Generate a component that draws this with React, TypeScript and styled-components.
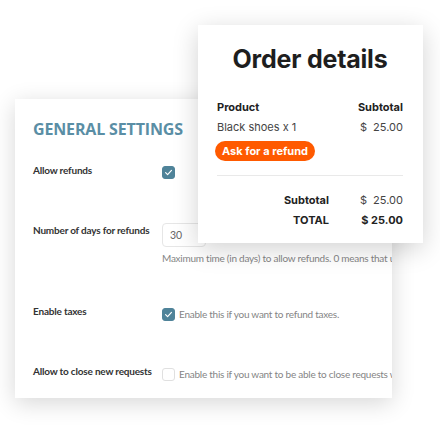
import React from 'react';
import styled, { createGlobalStyle } from 'styled-components';

const GlobalStyle = createGlobalStyle`
	html, body {
		margin: 0;
		padding: 0;
		background: #ffffff;
	}
	* {
		box-sizing: border-box;
	}
`;

const CheckMark = () => (
	<svg width='9' height='9' viewBox='0 0 10 10' fill='none'>
		<path
			d='M1.8 5.2 L4 7.3 L8.3 2.6'
			stroke='#ffffff'
			strokeWidth='1.3'
			strokeLinecap='round'
			strokeLinejoin='round'
		/>
	</svg>
);

interface ISettingRow {
	label: string;
	checked?: boolean;
	input?: string;
	help?: string;
	text?: string;
	height: number;
}

const settings: ISettingRow[] = [
	{ label: 'Allow refunds', checked: true, height: 60 },
	{
		label: 'Number of days for refunds',
		input: '30',
		help: 'Maximum time (in days) to allow refunds. 0 means that users can ask for a refund at any time.',
		height: 81,
	},
	{
		label: 'Enable taxes',
		checked: true,
		text: 'Enable this if you want to refund taxes.',
		height: 60,
	},
	{
		label: 'Allow to close new requests',
		checked: false,
		text: 'Enable this if you want to be able to close requests without answering them.',
		height: 33,
	},
];

export default function App() {
	return (
		<>
			<GlobalStyle />
			<Stage>
				<SettingsCard>
					<SettingsTitle>GENERAL SETTINGS</SettingsTitle>
					{settings.map(row => (
						<Row key={row.label} $height={row.height}>
							<Label>{row.label}</Label>
							<Field>
								{row.input !== undefined ? (
									<>
										<NumberInput>{row.input}</NumberInput>
										<Help>{row.help}</Help>
									</>
								) : (
									<CheckLine>
										<Checkbox $checked={row.checked}>
											{row.checked && <CheckMark />}
										</Checkbox>
										{row.text && <Help>{row.text}</Help>}
									</CheckLine>
								)}
							</Field>
						</Row>
					))}
				</SettingsCard>

				<OrderCard>
					<OrderTitle>Order details</OrderTitle>
					<ItemHead>
						<span>Product</span>
						<span>Subtotal</span>
					</ItemHead>
					<ItemRow>
						<span>Black shoes x 1</span>
						<span>$&nbsp;&nbsp;25.00</span>
					</ItemRow>
					<RefundButton>Ask for a refund</RefundButton>
					<Divider />
					<TotalRow>
						<TotalLabel>Subtotal</TotalLabel>
						<TotalValue>$&nbsp;&nbsp;25.00</TotalValue>
					</TotalRow>
					<TotalRow $gap={6}>
						<TotalLabel>TOTAL</TotalLabel>
						<TotalValue $bold>$ 25.00</TotalValue>
					</TotalRow>
				</OrderCard>
			</Stage>
		</>
	);
}

const Stage = styled.div`
	position: relative;
	width: 440px;
	height: 434px;
	padding: 99px 0 0 15px;
	overflow: hidden;
`;

const SettingsCard = styled.div`
	width: 377px;
	height: 299px;
	padding: 19px 0 0 18px;
	background: #ffffff;
	box-shadow: 0 5px 22px rgba(0, 0, 0, 0.16);
	overflow: hidden;
	font-family: Lato, 'Open Sans', sans-serif;
`;

const SettingsTitle = styled.h2`
	margin: 0 0 23px;
	font-family: 'Open Sans', sans-serif;
	font-size: 16px;
	line-height: 22px;
	font-weight: 700;
	color: #5a8ea5;
	letter-spacing: -0.15px;
`;

const Row = styled.div<{ $height: number }>`
	display: grid;
	grid-template-columns: 129px 1fr;
	align-items: start;
	height: ${p => p.$height}px;
`;

const Label = styled.div`
	font-size: 10px;
	line-height: 14px;
	font-weight: 700;
	color: #333333;
	letter-spacing: -0.2px;
	white-space: nowrap;
`;

const Field = styled.div`
	display: flex;
	flex-direction: column;
	min-width: 0;
`;

const CheckLine = styled.div`
	display: flex;
	align-items: center;
	gap: 4px;
	margin-top: 3px;
	white-space: nowrap;
`;

const Checkbox = styled.span<{ $checked?: boolean }>`
	display: inline-flex;
	align-items: center;
	justify-content: center;
	flex: none;
	width: 13px;
	height: 13px;
	border-radius: 3px;
	background: ${p => (p.$checked ? '#4f8399' : '#ffffff')};
	border: 1px solid ${p => (p.$checked ? '#4f8399' : '#e0e0e0')};
`;

const NumberInput = styled.div`
	width: 44px;
	height: 24px;
	padding: 0 7px;
	border: 1px solid #e6e6e6;
	border-radius: 4px;
	font-size: 10.5px;
	line-height: 22px;
	color: #666666;
`;

const Help = styled.span`
	display: block;
	margin-top: 4px;
	font-size: 10px;
	line-height: 14px;
	color: #858585;
	letter-spacing: -0.25px;
	white-space: nowrap;

	${CheckLine} & {
		margin-top: 0;
	}
`;

const OrderCard = styled.div`
	position: absolute;
	top: 25px;
	left: 198px;
	width: 225px;
	padding: 19px 20px 16px 19px;
	background: #ffffff;
	box-shadow: 0 6px 24px rgba(0, 0, 0, 0.18);
	font-family: Inter, 'Noto Sans', sans-serif;
	color: #222222;
`;

const OrderTitle = styled.h1`
	margin: 0 0 26px;
	text-align: center;
	font-size: 25px;
	line-height: 30px;
	font-weight: 700;
	color: #1e1e1e;
	letter-spacing: -0.2px;
`;

const ItemHead = styled.div`
	display: flex;
	justify-content: space-between;
	font-size: 11px;
	line-height: 14px;
	font-weight: 700;
`;

const ItemRow = styled(ItemHead)`
	margin-top: 6px;
	font-weight: 400;
	color: #444444;
`;

const RefundButton = styled.button`
	display: block;
	margin-top: 7px;
	height: 20px;
	width: 100px;
	margin-left: -2px;
	padding: 0;
	border: none;
	border-radius: 10px;
	background: #ff5a00;
	color: #ffffff;
	font-family: inherit;
	font-size: 11px;
	font-weight: 700;
	line-height: 20px;
`;

const Divider = styled.div`
	height: 1px;
	margin-top: 14px;
	background: #e9e9e9;
`;

const TotalRow = styled.div<{ $gap?: number }>`
	display: grid;
	grid-template-columns: 1fr 74px;
	margin-top: ${p => p.$gap ?? 17}px;
	font-size: 11px;
	line-height: 14px;
`;

const TotalLabel = styled.span`
	text-align: right;
	font-weight: 700;
`;

const TotalValue = styled.span<{ $bold?: boolean }>`
	text-align: right;
	font-weight: ${p => (p.$bold ? 700 : 400)};
	color: ${p => (p.$bold ? '#222222' : '#444444')};
`;
